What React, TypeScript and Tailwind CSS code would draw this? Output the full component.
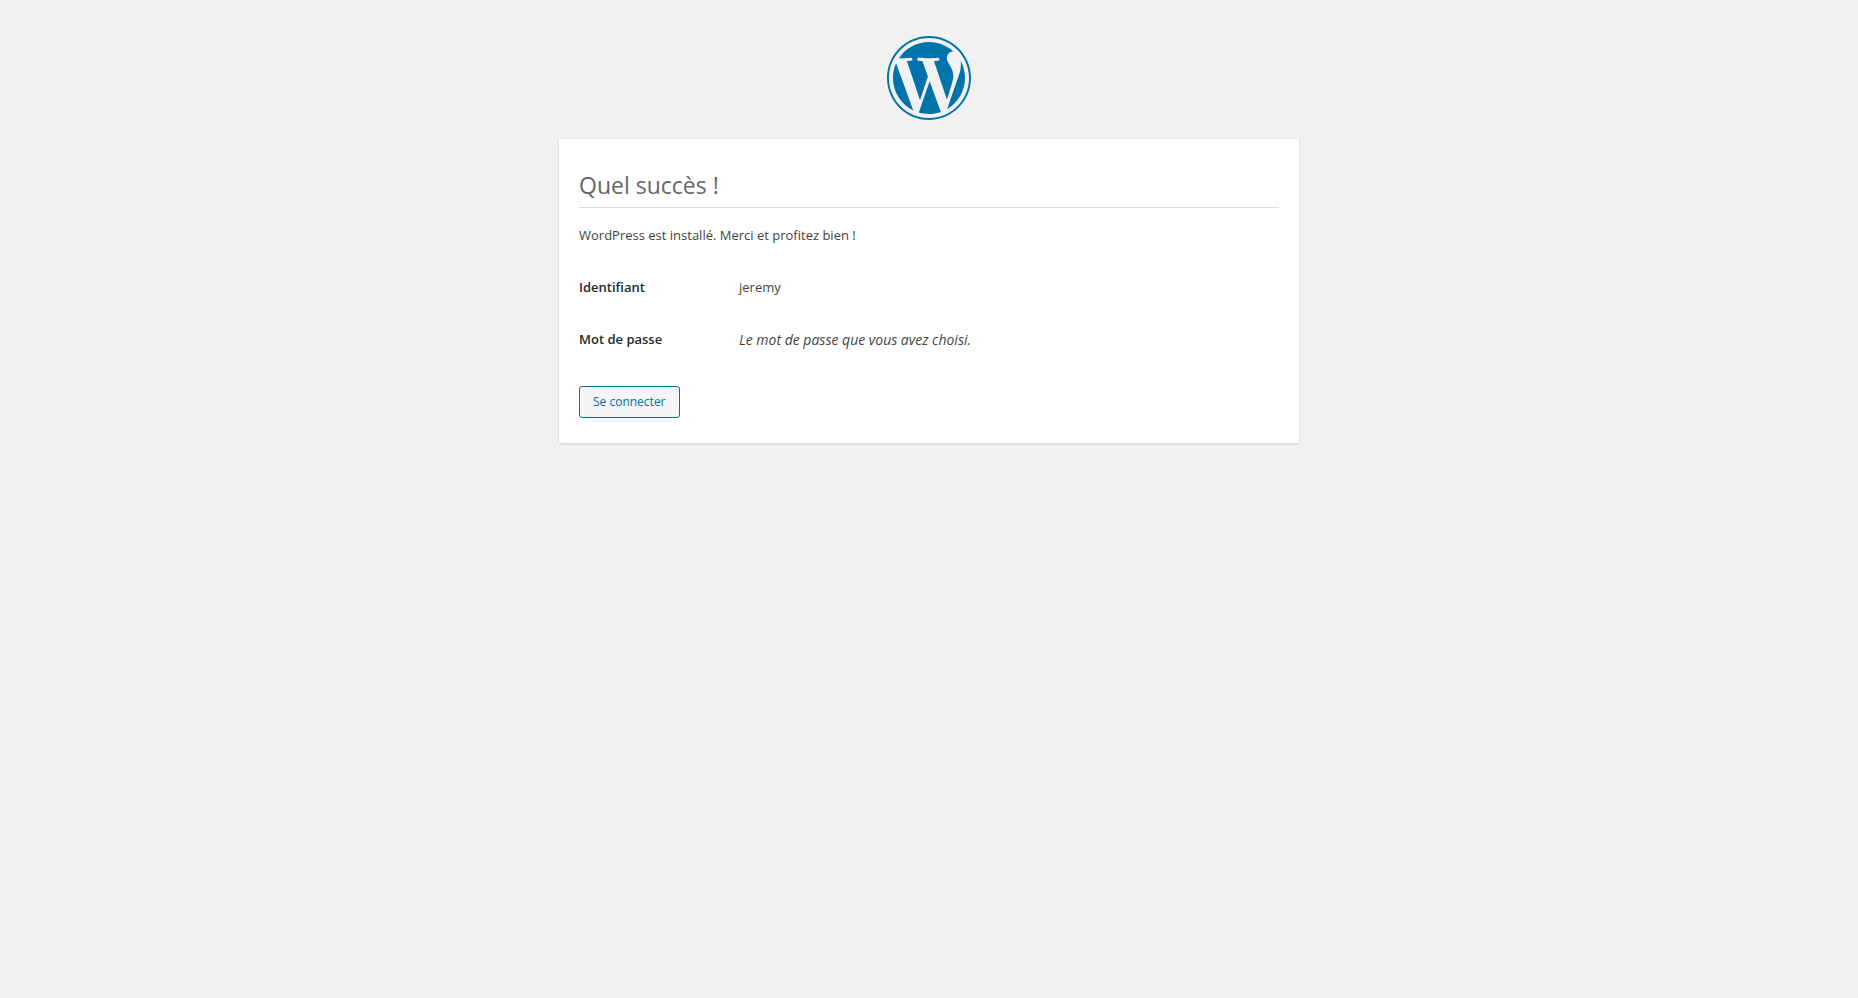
function WordPressLogo() {
    return (
        <svg viewBox="0 0 122.52 122.523" className="size-[84px]" fill="#0073aa" aria-hidden="true">
            <path d="M8.708,61.26c0,20.802,12.089,38.779,29.619,47.298L13.258,39.872C10.342,46.408,8.708,53.641,8.708,61.26z" />
            <path d="M96.74,58.608c0-6.495-2.333-10.993-4.334-14.494c-2.664-4.329-5.161-7.995-5.161-12.324c0-4.831,3.664-9.328,8.825-9.328c0.233,0,0.454,0.029,0.681,0.042c-9.35-8.566-21.807-13.796-35.489-13.796c-18.36,0-34.513,9.42-43.91,23.688c1.233,0.037,2.395,0.063,3.382,0.063c5.497,0,14.006-0.667,14.006-0.667c2.833-0.167,3.167,3.994,0.337,4.329c0,0-2.847,0.335-6.015,0.501L48.2,93.547l11.501-34.493l-8.188-22.434c-2.83-0.166-5.511-0.501-5.511-0.501c-2.832-0.166-2.5-4.496,0.332-4.329c0,0,8.679,0.667,13.843,0.667c5.496,0,14.006-0.667,14.006-0.667c2.835-0.167,3.168,3.994,0.337,4.329c0,0-2.853,0.335-6.015,0.501l18.992,56.494l5.242-17.517C95.011,68.328,96.74,63.107,96.74,58.608z" />
            <path d="M62.184,65.857l-15.768,45.819c4.708,1.384,9.687,2.141,14.846,2.141c6.12,0,11.989-1.058,17.452-2.979c-0.141-0.225-0.269-0.464-0.374-0.724L62.184,65.857z" />
            <path d="M107.376,36.046c0.226,1.674,0.354,3.471,0.354,5.404c0,5.333-0.996,11.328-3.996,18.824l-16.053,46.413c15.624-9.111,26.133-26.038,26.133-45.426C113.815,52.124,111.481,43.532,107.376,36.046z" />
            <path d="M61.262,0C27.483,0,0,27.481,0,61.26c0,33.783,27.483,61.263,61.262,61.263c33.778,0,61.265-27.48,61.265-61.263C122.526,27.481,95.04,0,61.262,0z M61.262,119.715c-32.23,0-58.453-26.223-58.453-58.455c0-32.23,26.222-58.451,58.453-58.451c32.229,0,58.45,26.221,58.45,58.451C119.712,93.492,93.491,119.715,61.262,119.715z" />
        </svg>
    );
}

export default function App() {
    return (
        <div className="min-h-screen bg-[#f1f1f1] pt-9 pb-6 font-['Open_Sans',sans-serif] text-[13px] text-[#444]">
            <a href="https://fr.wordpress.org/" aria-label="WordPress" className="mx-auto mb-[19px] block w-fit">
                <WordPressLogo />
            </a>

            <main className="mx-auto max-w-[740px] bg-white px-5 pt-[30px] pb-[25px] shadow-[0_1px_3px_rgba(0,0,0,0.13)]">
                <h1 className="border-b border-[#dadada] pb-1.5 text-[23px] leading-8 text-[#666]">Quel succès !</h1>
                <p className="mt-[15px] leading-6">WordPress est installé. Merci et profitez bien !</p>

                {/* Account details */}
                <table className="mt-[15px] w-full text-left">
                    <tbody>
                        <tr className="h-13">
                            <th scope="row" className="w-40 font-semibold text-[#23282d]">Identifiant</th>
                            <td>jeremy</td>
                        </tr>
                        <tr className="h-13">
                            <th scope="row" className="w-40 font-semibold text-[#23282d]">Mot de passe</th>
                            <td className="text-sm italic">Le mot de passe que vous avez choisi.</td>
                        </tr>
                    </tbody>
                </table>

                <a
                    href="/wp-login.php"
                    className="mt-5 flex h-8 w-fit items-center rounded-[3px] border border-[#0071a1] bg-[#f3f5f6] px-[13px] text-xs text-[#0071a1]"
                >
                    Se connecter
                </a>
            </main>
        </div>
    );
}
